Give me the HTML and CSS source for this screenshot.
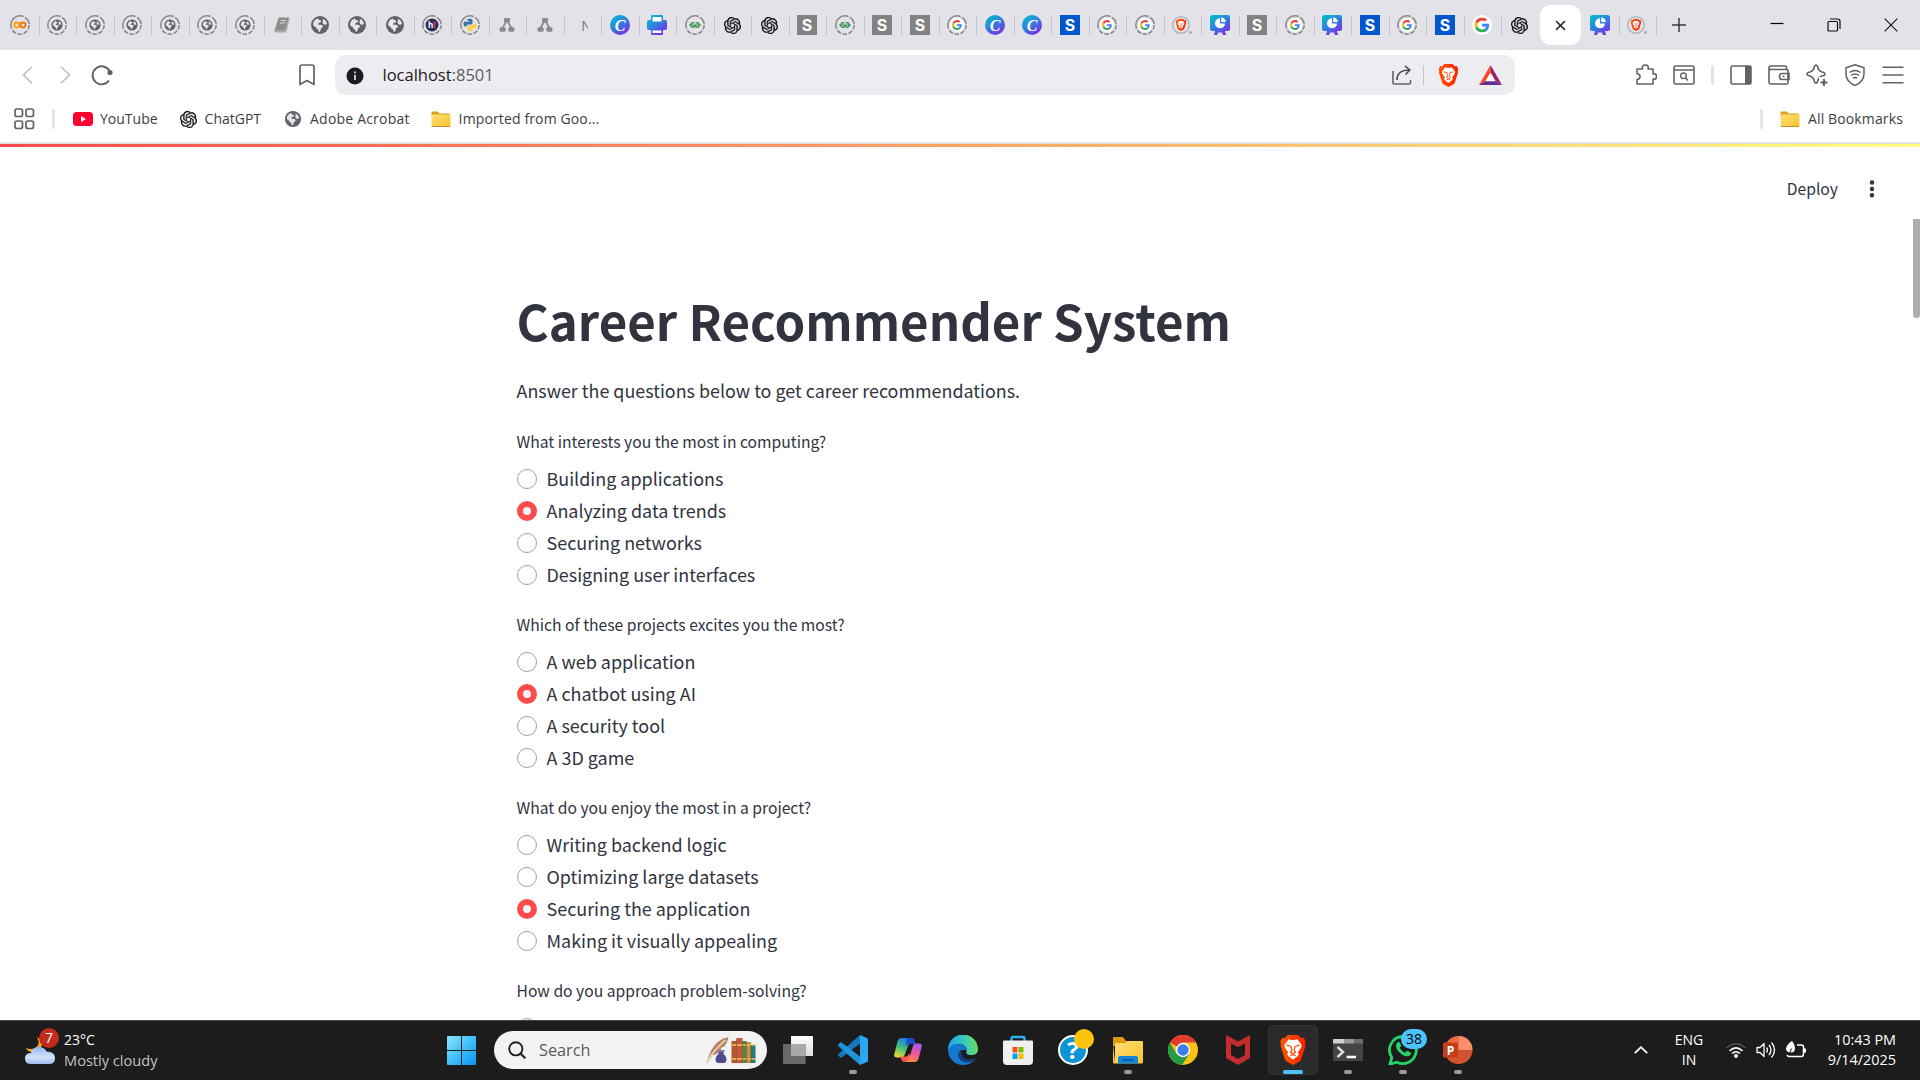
FILE: index.html
```html
<!DOCTYPE html>
<html lang="en">
<head>
<meta charset="utf-8">
<title>Career Recommender System</title>
<link rel="stylesheet" href="styles.css">
</head>
<body>
<svg class="gradients" width="0" height="0" aria-hidden="true">
  <defs>
    <linearGradient id="gCanva" x1="0" y1="0" x2=".7" y2="1"><stop offset="0" stop-color="#00c4cc"/><stop offset=".5" stop-color="#2b86dd"/><stop offset="1" stop-color="#7d2ae8"/></linearGradient>
    <linearGradient id="gWin" x1="0" y1="0" x2="1" y2="1"><stop offset="0" stop-color="#8be3ff"/><stop offset=".5" stop-color="#41c1fb"/><stop offset="1" stop-color="#0a90f5"/></linearGradient>
    <linearGradient id="gFolder" x1="0" y1="0" x2="1" y2="1"><stop offset="0" stop-color="#ffe07a"/><stop offset="1" stop-color="#f8c32c"/></linearGradient>
    <linearGradient id="gEdge" x1="0" y1=".3" x2="1" y2=".2"><stop offset="0" stop-color="#1fa2e4"/><stop offset=".5" stop-color="#36c6c6"/><stop offset="1" stop-color="#6fdd55"/></linearGradient>
    <linearGradient id="gBrave" x1="0" y1="0" x2="1" y2="0"><stop offset="0" stop-color="#ff5500"/><stop offset="1" stop-color="#ff2000"/></linearGradient>
    <linearGradient id="gCop1" x1=".6" y1="0" x2=".3" y2="1"><stop offset="0" stop-color="#1e7be8"/><stop offset=".5" stop-color="#3fc27a"/><stop offset="1" stop-color="#f6d233"/></linearGradient>
    <linearGradient id="gCop2" x1=".6" y1="0" x2=".3" y2="1"><stop offset="0" stop-color="#a259f0"/><stop offset=".5" stop-color="#f0569a"/><stop offset="1" stop-color="#ff8a4a"/></linearGradient>
    <linearGradient id="gCloud" x1="0" y1="0" x2="0" y2="1"><stop offset="0" stop-color="#8fb4f2"/><stop offset=".6" stop-color="#d5e3fb"/><stop offset="1" stop-color="#9dbcf3"/></linearGradient>
    <linearGradient id="gTv" x1="0" y1="0" x2="0" y2="1"><stop offset="0" stop-color="#fff"/><stop offset="1" stop-color="#dcdcdc"/></linearGradient>
  </defs>
</svg>
<svg class="sprite" aria-hidden="true">
  <symbol id="ring" viewBox="0 0 20 20"><circle cx="10" cy="10" r="9.200" fill="none" stroke="#85878b" stroke-width="1.500" stroke-dasharray="4.600 1.600 4.600 1.600 4.600 1.600 4.600 1.600 22 1.600 8 1.400"/></symbol>
  <symbol id="earth" viewBox="0 0 20 20"><circle cx="10" cy="10" r="9" fill="#5f6368"/><path d="M3 9.500Q3.500 5 7.500 3.400q1.800.2 1 1.800 2.700-.4 2.500 1.200-.3 1.400-2.200 1.300-.3 1.200-1.300 1.800 3 0 4.500.6 1.400 1 .7 2.400-2 .4-1.900 1.700-.2 2-1.500 2.700-1.500-.4-1.200-2.400-2.100-.5-2.300-2.500Q3.800 11.500 3 9.500z" fill="#e6e6ea"/><path d="M12.500 3.500q3.700 1.600 4.500 5.200-1 1.500-2.800.9-1.500-.2-1.400-1.600-1-1.700.3-2.500z" fill="#e6e6ea"/></symbol>
  <symbol id="globe" viewBox="0 0 20 20"><use href="#ring"/><use href="#earth" x="3.800" y="3.800" width="12.400" height="12.400"/></symbol>
  <symbol id="colab" viewBox="0 0 20 20"><use href="#ring"/><circle cx="6.800" cy="10" r="2.500" fill="none" stroke="#f9a30b" stroke-width="1.900"/><circle cx="13" cy="10" r="2.500" fill="none" stroke="#ee7708" stroke-width="1.900"/></symbol>
  <symbol id="book" viewBox="0 0 20 20"><path d="M6.500 2.500h10.500l-3.500 12.500H2.800z" fill="#8c8c8c"/><path d="M2.500 15h11l3.800-12 .6 1-3.700 13.500H3.200Q1.600 17 2.500 15z" fill="#a9a9a9"/><path d="M8.500 5.500h5.500M7.800 8h5.500" stroke="#d6d6d6"/></symbol>
  <symbol id="hashnode" viewBox="0 0 20 20"><use href="#ring"/><circle cx="10" cy="10" r="6.500" fill="#2f2a5c"/><text x="6" y="13" class="mark-h">h<tspan fill="#f04e6c">!</tspan></text></symbol>
  <symbol id="python" viewBox="0 0 20 20"><use href="#ring"/><path d="M6.500 4.500Q10 3 12.500 4.500V8q0 1.500-1.500 1.500H8q-1.500 0-1.500 2H5q-1.500-.5-1.500-3T5 6.800h4.500z" fill="#3775a9"/><path d="M13.500 15.500Q10 17 7.500 15.500V12q0-1.500 1.500-1.500h3q1.500 0 1.500-2H15q1.500.5 1.500 3T15 13.200h-4.500z" fill="#ffcf3f"/></symbol>
  <symbol id="nodes" viewBox="0 0 20 20"><path d="M10 5L5 14M10 5l5 9" stroke="#8a8a8a" stroke-width="1.700"/><rect x="7" y="3" width="6" height="4.500" rx="1" fill="#8a8a8a"/><rect x="2.600" y="12.300" width="6" height="4.500" rx="1" fill="#8a8a8a"/><rect x="11.400" y="12.300" width="6" height="4.500" rx="1" fill="#8a8a8a"/></symbol>
  <symbol id="canva" viewBox="0 0 20 20"><circle cx="10" cy="10" r="10" fill="url(#gCanva)"/><text x="10" y="15.500" class="mark-c">C</text></symbol>
  <symbol id="printer" viewBox="0 0 20 20"><path d="M5 0h10q1 0 1 1v4h2q2 0 2 2v6q0 2-2 2h-2v4q0 1-1 1H5q-1 0-1-1v-4H2q-2 0-2-2V7q0-2 2-2h2V1q0-1 1-1z" fill="url(#gCanva)"/><path d="M5.500 2h9v4.500h-9zM5.500 15.500h9V18h-9z" fill="#fff"/></symbol>
  <symbol id="gfg" viewBox="0 0 20 20"><use href="#ring"/><path d="M4 10h12M9.300 8.300a2.200 2.200 0 1 0 0 3.400V10M10.700 8.300a2.200 2.200 0 1 1 0 3.400V10" fill="none" stroke="#2f8d46" stroke-width="1.200"/></symbol>
  <symbol id="openai" viewBox="0 0 24 24"><path d="M22.2819 9.8211a5.9847 5.9847 0 0 0-.5157-4.9108 6.0462 6.0462 0 0 0-6.5098-2.9A6.0651 6.0651 0 0 0 4.9807 4.1818a5.9847 5.9847 0 0 0-3.9977 2.9 6.0462 6.0462 0 0 0 .7427 7.0966 5.98 5.98 0 0 0 .511 4.9107 6.051 6.051 0 0 0 6.5146 2.9001A5.9847 5.9847 0 0 0 13.2599 24a6.0557 6.0557 0 0 0 5.7718-4.2058 5.9894 5.9894 0 0 0 3.9977-2.9001 6.0557 6.0557 0 0 0-.7475-7.0729zm-9.022 12.6081a4.4755 4.4755 0 0 1-2.8764-1.0408l.1419-.0804 4.7783-2.7582a.7948.7948 0 0 0 .3927-.6813v-6.7369l2.02 1.1686a.071.071 0 0 1 .038.052v5.5826a4.504 4.504 0 0 1-4.4945 4.4944zm-9.6607-4.1254a4.4708 4.4708 0 0 1-.5346-3.0137l.142.0852 4.783 2.7582a.7712.7712 0 0 0 .7806 0l5.8428-3.3685v2.3324a.0804.0804 0 0 1-.0332.0615L9.74 19.9502a4.4992 4.4992 0 0 1-6.1408-1.6464zM2.3408 7.8956a4.485 4.485 0 0 1 2.3655-1.9728V11.6a.7664.7664 0 0 0 .3879.6765l5.8144 3.3543-2.0201 1.1685a.0757.0757 0 0 1-.071 0l-4.8303-2.7865A4.504 4.504 0 0 1 2.3408 7.872zm16.5963 3.8558L13.1038 8.364 15.1192 7.2a.0757.0757 0 0 1 .071 0l4.8303 2.7913a4.4944 4.4944 0 0 1-.6765 8.1042v-5.6772a.79.79 0 0 0-.407-.667zm2.0107-3.0231l-.142-.0852-4.7735-2.7818a.7759.7759 0 0 0-.7854 0L9.409 9.2297V6.8974a.0662.0662 0 0 1 .0284-.0615l4.8303-2.7866a4.4992 4.4992 0 0 1 6.6802 4.66zM8.3065 12.863l-2.02-1.1638a.0804.0804 0 0 1-.038-.0567V6.0742a4.4992 4.4992 0 0 1 7.3757-3.4537l-.142.0805L8.704 5.459a.7948.7948 0 0 0-.3927.6813zm1.0976-2.3654l2.602-1.4998 2.6069 1.4998v2.9994l-2.5974 1.4997-2.6067-1.4997Z" fill="#111" stroke="#111" stroke-width=".4"/></symbol>
  <symbol id="sgrey" viewBox="0 0 20 20"><rect width="20" height="20" fill="#828282"/><text x="10" y="15.800" class="mark-s">S</text></symbol>
  <symbol id="sblue" viewBox="0 0 20 20"><rect width="20" height="20" fill="#0056cc"/><text x="10" y="15.800" class="mark-s">S</text></symbol>
  <symbol id="goog" viewBox="0 0 48 48"><path fill="#EA4335" d="M24 9.500c3.540 0 6.710 1.220 9.210 3.600l6.850-6.850C35.900 2.380 30.470 0 24 0 14.620 0 6.510 5.380 2.560 13.220l7.980 6.190C12.430 13.720 17.740 9.500 24 9.500z"/><path fill="#4285F4" d="M46.980 24.550c0-1.570-.15-3.090-.38-4.550H24v9.020h12.940c-.58 2.960-2.260 5.480-4.780 7.180l7.730 6c4.510-4.180 7.090-10.360 7.090-17.650z"/><path fill="#FBBC05" d="M10.530 28.590c-.48-1.450-.76-2.990-.76-4.590s.27-3.140.76-4.590l-7.980-6.190C.92 16.460 0 20.120 0 24c0 3.880.92 7.540 2.560 10.780l7.970-6.190z"/><path fill="#34A853" d="M24 48c6.480 0 11.930-2.130 15.890-5.810l-7.730-6c-2.150 1.450-4.920 2.300-8.160 2.300-6.260 0-11.570-4.220-13.470-9.910l-7.980 6.190C6.510 42.620 14.620 48 24 48z"/></symbol>
  <symbol id="gring" viewBox="0 0 20 20"><circle cx="10" cy="10" r="7" fill="#fff"/><use href="#ring"/><use href="#goog" x="5" y="5" width="10" height="10"/></symbol>
  <symbol id="gfull" viewBox="0 0 20 20"><circle cx="10" cy="10" r="10" fill="#fff"/><use href="#goog" x="2.500" y="2.500" width="15" height="15"/></symbol>
  <symbol id="lion" viewBox="0 0 24 28"><path d="M7 0h10l2.500 2.800 2.500-.3L24 6l-.8 2.500.5 1.500-4 12.500q-.5 1.500-2 2.500L12 28l-5.700-3q-1.500-1-2-2.500L.3 10l.5-1.500L0 6l2-3.500 2.500.3z" fill="url(#gBrave)"/><path d="M8 4l4 .8L16 4l4 5-.5 3-3 4 1 2-1.500 2-4 3-4-3-1.500-2 1-2-3-4L4 9z" fill="#fff"/><path d="M6 9.500l4.500 1.200M18 9.500l-4.500 1.200M10.300 11l.7 3.500-1.500 1.700 2.500 1.300 2.500-1.300-1.500-1.700.7-3.500M9.500 19.500l2.500-1.300 2.500 1.300" fill="none" stroke="#ff4500" stroke-width="1.100"/></symbol>
  <symbol id="bravering" viewBox="0 0 20 20"><circle cx="9" cy="10" r="8.300" fill="none" stroke="#b3b6be" stroke-width="1.500"/><use href="#lion" x="3.500" y="4" width="11" height="12"/><circle cx="18.500" cy="17.500" r="1.400" fill="#a5a8ae"/></symbol>
  <symbol id="present" viewBox="0 0 20 20"><path d="M2.500 0h15Q20 0 20 2.500v11q0 2.500-2.500 2.500H15l1 4h-3l-1-2.500H8L7 20H4l1-4H2.500Q0 16 0 13.500v-11Q0 0 2.500 0z" fill="url(#gCanva)"/><path d="M10 3.300a5 5 0 1 0 5 5.200h-5z" fill="#fff"/><path d="M11.200 2.500v4.600h4.600a4.600 4.600 0 0 0-4.600-4.600z" fill="#fff"/></symbol>
  <symbol id="folder" viewBox="0 0 20 17"><path d="M1.500 1h5l2 2H18q1 0 1 1v3H.500V2q0-1 1-1z" fill="#dca11c"/><path d="M1.500 4H18.500q1 0 1 1v10q0 1.200-1 1.200H1.500q-1 0-1-1.200V5q0-1 1-1z" fill="url(#gFolder)"/><path d="M1 16h18" stroke="#c69126"/></symbol>
</svg>

<header class="browser">
  <div class="tabstrip">
    <div class="tab"><svg><use href="#colab"/></svg></div>
    <div class="tab"><svg><use href="#globe"/></svg></div>
    <div class="tab"><svg><use href="#globe"/></svg></div>
    <div class="tab"><svg><use href="#globe"/></svg></div>
    <div class="tab"><svg><use href="#globe"/></svg></div>
    <div class="tab"><svg><use href="#globe"/></svg></div>
    <div class="tab"><svg><use href="#globe"/></svg></div>
    <div class="tab"><svg><use href="#book"/></svg></div>
    <div class="tab"><svg><use href="#earth"/></svg></div>
    <div class="tab"><svg><use href="#earth"/></svg></div>
    <div class="tab"><svg><use href="#earth"/></svg></div>
    <div class="tab"><svg><use href="#hashnode"/></svg></div>
    <div class="tab"><svg><use href="#python"/></svg></div>
    <div class="tab"><svg><use href="#nodes"/></svg></div>
    <div class="tab"><svg><use href="#nodes"/></svg></div>
    <div class="tab"><span class="tab-text">N</span></div>
    <div class="tab"><svg><use href="#canva"/></svg></div>
    <div class="tab"><svg><use href="#printer"/></svg></div>
    <div class="tab"><svg><use href="#gfg"/></svg></div>
    <div class="tab"><svg class="small"><use href="#openai"/></svg></div>
    <div class="tab"><svg class="small"><use href="#openai"/></svg></div>
    <div class="tab"><svg><use href="#sgrey"/></svg></div>
    <div class="tab"><svg><use href="#gfg"/></svg></div>
    <div class="tab"><svg><use href="#sgrey"/></svg></div>
    <div class="tab"><svg><use href="#sgrey"/></svg></div>
    <div class="tab"><svg><use href="#gring"/></svg></div>
    <div class="tab"><svg><use href="#canva"/></svg></div>
    <div class="tab"><svg><use href="#canva"/></svg></div>
    <div class="tab"><svg><use href="#sblue"/></svg></div>
    <div class="tab"><svg><use href="#gring"/></svg></div>
    <div class="tab"><svg><use href="#gring"/></svg></div>
    <div class="tab"><svg><use href="#bravering"/></svg></div>
    <div class="tab"><svg><use href="#present"/></svg></div>
    <div class="tab"><svg><use href="#sgrey"/></svg></div>
    <div class="tab"><svg><use href="#gring"/></svg></div>
    <div class="tab"><svg><use href="#present"/></svg></div>
    <div class="tab"><svg><use href="#sblue"/></svg></div>
    <div class="tab"><svg><use href="#gring"/></svg></div>
    <div class="tab"><svg><use href="#sblue"/></svg></div>
    <div class="tab"><svg><use href="#gfull"/></svg></div>
    <div class="tab plain"><svg class="small"><use href="#openai"/></svg></div>
    <div class="tab-active"><svg viewBox="0 0 12 12"><path d="M1.200 1.200l9.600 9.600M10.800 1.200L1.200 10.800" stroke="#333" stroke-width="1.700"/></svg></div>
    <div class="tab"><svg><use href="#present"/></svg></div>
    <div class="tab"><svg><use href="#bravering"/></svg></div>
    <svg class="newtab" viewBox="0 0 14 14"><path d="M7 0v14M0 7h14" stroke="#3b3b40" stroke-width="1.500"/></svg>
    <div class="window-buttons">
      <svg viewBox="0 0 14 14"><path d="M.5 5.500h13" stroke="#000" stroke-width="1.200"/></svg>
      <svg viewBox="0 0 14 14"><path d="M1 4.500q0-1 1-1h7.500q1 0 1 1V12q0 1-1 1H2q-1 0-1-1zM3 1h7.500q2.500 0 2.500 2.500V11" fill="none" stroke="#111" stroke-width="1.200"/></svg>
      <svg viewBox="0 0 14 14"><path d="M.7.7l12.600 12.600M13.300.7L.7 13.300" stroke="#111" stroke-width="1.100"/></svg>
    </div>
  </div>

  <div class="toolbar">
    <div class="nav">
      <svg class="back" viewBox="0 0 12 20"><path d="M11 1L1.500 10l9.500 9" fill="none" stroke="#bcbdc1" stroke-width="1.700"/></svg>
      <svg class="fwd" viewBox="0 0 12 20"><path d="M1 1l9.500 9L1 19" fill="none" stroke="#bcbdc1" stroke-width="1.700"/></svg>
      <svg class="reload" viewBox="0 0 22 22"><path d="M18 16.500A9 9 0 1 1 18.500 7" fill="none" stroke="#5f6368" stroke-width="1.900"/><circle cx="19" cy="8.500" r="2.600" fill="#5f6368"/></svg>
      <svg class="mark" viewBox="0 0 16 22"><path d="M1 3q0-2 2-2h10q2 0 2 2v17.500L8 16.500 1 20.500z" fill="none" stroke="#5f6368" stroke-width="1.700" stroke-linejoin="round"/></svg>
    </div>
    <div class="urlbar">
      <svg class="info" viewBox="0 0 18 18"><circle cx="9" cy="9" r="8.500" fill="#1d1b20"/><path d="M9 7.800V13M9 4.500v1.700" stroke="#edecf1" stroke-width="1.600"/></svg>
      <div class="url">localhost<span>:8501</span></div>
      <svg class="share" viewBox="0 0 20 20"><path d="M1 6v12q0 1 1 1h15q1.500 0 1.500-1v-3" fill="none" stroke="#5f6368" stroke-width="1.600"/><path d="M5 15Q5 5 17.500 5M13 .8L17.800 5 13.500 9.500" fill="none" stroke="#4b4c52" stroke-width="1.600"/></svg>
      <i class="bar"></i>
      <svg class="shield-lion" viewBox="0 0 24 28"><use href="#lion"/></svg>
      <svg class="bat" viewBox="0 0 23 20"><path d="M11.500 0L0 20l6.500-4 5-8.500z" fill="#ff4724"/><path d="M11.500 0L23 20l-6.500-4-5-8.500z" fill="#9e1f63"/><path d="M0 20h23l-6.500-4h-10z" fill="#662d91"/><path d="M11.500 8l5 8.200h-10z" fill="#fff"/></svg>
    </div>
    <div class="tools">
      <svg viewBox="0 0 22 22"><path d="M2 5h5.500q-1-4 2.800-4t2.700 4h5v5q3.500-.8 3.500 2.500t-3.500 2.500v5H2v-4.500q3-.3 3-3T2 9.700z" fill="none" stroke="#5f6368" stroke-width="1.600" stroke-linejoin="round"/></svg>
      <svg viewBox="0 0 22 22"><path d="M1 3.500q0-1.500 1.500-1.500h17q1.500 0 1.500 1.500v15q0 1.500-1.500 1.500h-17Q1 20 1 18.500zM1 6h20" fill="none" stroke="#5f6368" stroke-width="1.600"/><circle cx="10.500" cy="11.800" r="2.800" fill="none" stroke="#5f6368" stroke-width="1.400"/><path d="M12.500 14l2.500 2.500" stroke="#5f6368" stroke-width="1.500"/></svg>
      <i class="bar"></i>
      <svg viewBox="0 0 22 22"><rect x="1" y="2" width="20" height="18" rx="1.500" fill="none" stroke="#5f6368" stroke-width="1.600"/><path d="M15 2h6v18h-6z" fill="#5f6368"/></svg>
      <svg viewBox="0 0 22 22"><path d="M18.500 5V3.500Q18.500 2 17 2H3Q1 2 1 4v14q0 2 2 2h15.500q1.500 0 1.500-1.500V7q0-1.500-1.500-1.500H3Q1 5.500 1 4M21 9.500h-7q-2.500 0-2.500 3t2.500 3h7zM14.500 12.500h2" fill="none" stroke="#5f6368" stroke-width="1.600"/></svg>
      <svg viewBox="0 0 22 22"><path d="M10 1q1.500 0 2 3 .8 3 4 4 3 .7 3 2t-3 2q-3.200 1-4 4-.5 3-2 3t-2-3q-.8-3-4-4-3-.7-3-2t3-2q3.200-1 4-4 .5-3 2-3z" fill="none" stroke="#5f6368" stroke-width="1.600"/><path d="M13 13h9v9h-9z" fill="#fff"/><path d="M18 15v7M14.500 18.500h7" stroke="#5f6368" stroke-width="2"/></svg>
      <svg viewBox="0 0 22 22"><path d="M11 .8l9 3v6q0 8-9 11.700-9-3.700-9-11.700v-6z" fill="none" stroke="#5f6368" stroke-width="1.500" stroke-linejoin="round"/><path d="M5.500 8.500q5.500-4 11 0M7 11.500q4-2.800 8 0M9 14q2-1.200 4 0" fill="none" stroke="#5f6368" stroke-width="1.500"/></svg>
      <svg viewBox="0 0 22 22"><path d="M.5 3.300h21M.5 11h21M.5 18.700h21" stroke="#5f6368" stroke-width="1.500"/></svg>
    </div>
  </div>

  <div class="bookmarks">
    <svg class="grid" viewBox="0 0 21 22"><g fill="none" stroke="#5f6368" stroke-width="1.700"><rect x="1" y="1" width="7.500" height="7.500" rx="2"/><rect x="12" y="1" width="7.500" height="7.500" rx="2"/><rect x="1" y="13" width="7.500" height="7.500" rx="2"/><rect x="12" y="13" width="7.500" height="7.500" rx="2"/></g></svg>
    <i class="bar"></i>
    <span class="bm bm-yt"><svg class="yt" viewBox="0 0 20 14"><rect width="20" height="14" rx="3.500" fill="#ff0033"/><path d="M8 4l5 3-5 3z" fill="#fff"/></svg><span>YouTube</span></span>
    <span class="bm bm-gpt"><svg class="small"><use href="#openai"/></svg><span>ChatGPT</span></span>
    <span class="bm bm-adobe"><svg><use href="#earth"/></svg><span>Adobe Acrobat</span></span>
    <span class="bm bm-imp"><svg><use href="#folder"/></svg><span>Imported from Goo...</span></span>
    <i class="bar bar-right"></i>
    <span class="bm bm-all"><svg><use href="#folder"/></svg><span>All Bookmarks</span></span>
  </div>
</header>

<main class="app">
  <div class="decoration"></div>
  <div class="app-header">
    <span>Deploy</span>
    <svg viewBox="0 0 6 18"><g fill="#31333f"><circle cx="3" cy="2.500" r="2.200"/><circle cx="3" cy="9" r="2.200"/><circle cx="3" cy="15.300" r="2.200"/></g></svg>
  </div>
  <div class="scroll-thumb"></div>
  <section class="content">
    <h1>Career Recommender System</h1>
    <p class="intro">Answer the questions below to get career recommendations.</p>
    <div class="question">
      <div class="label">What interests you the most in computing?</div>
      <div class="option"><i></i>Building applications</div>
      <div class="option checked"><i></i>Analyzing data trends</div>
      <div class="option"><i></i>Securing networks</div>
      <div class="option"><i></i>Designing user interfaces</div>
    </div>
    <div class="question">
      <div class="label">Which of these projects excites you the most?</div>
      <div class="option"><i></i>A web application</div>
      <div class="option checked"><i></i>A chatbot using AI</div>
      <div class="option"><i></i>A security tool</div>
      <div class="option"><i></i>A 3D game</div>
    </div>
    <div class="question">
      <div class="label">What do you enjoy the most in a project?</div>
      <div class="option"><i></i>Writing backend logic</div>
      <div class="option"><i></i>Optimizing large datasets</div>
      <div class="option checked"><i></i>Securing the application</div>
      <div class="option"><i></i>Making it visually appealing</div>
    </div>
    <div class="question">
      <div class="label">How do you approach problem-solving?</div>
      <div class="option"><i></i></div>
    </div>
  </section>
</main>

<footer class="taskbar">
  <div class="weather">
    <div class="weather-icon">
      <svg viewBox="0 0 32 32"><path d="M13 3q4 8-2 11-4 2-9.500 0Q6 20 14 18l6-10z" fill="#f5a623"/><path d="M7 30q-6 0-6-5.500T7 19q1.500-6 8-6 5.500 0 7.500 4.500 8.500 0 8.500 6.500 0 6-6 6z" fill="url(#gCloud)"/></svg>
      <b>7</b>
    </div>
    <div class="weather-text"><span>23°C</span><em>Mostly cloudy</em></div>
  </div>
  <svg class="start" viewBox="0 0 29 29"><path d="M1 0h13v14H0V1q0-1 1-1zM15 0h13q1 0 1 1v13H15zM0 15h14v14H1q-1 0-1-1zM15 15h14v13q0 1-1 1H15z" fill="url(#gWin)"/></svg>
  <div class="search">
    <svg class="lens" viewBox="0 0 18 18"><circle cx="7.800" cy="7.800" r="6.600" fill="none" stroke="#222" stroke-width="1.900"/><path d="M12.500 12.500l4.800 4.800" stroke="#222" stroke-width="2.200"/></svg>
    <span>Search</span>
    <svg class="quill" viewBox="0 0 50 28"><path d="M1 27Q4 14 12 6q5-4 11-5-1 6-5 10l-3 1 1 1q-4 6-9 6L2 27z" fill="#b98562"/><path d="M1 27Q7 15 20 4" fill="none" stroke="#f1ddc8" stroke-width="1.500"/><path d="M13 15h5v3q3 2 3 5 0 4-3 4h-5q-3 0-3-4 0-3 3-5z" fill="#4d4a8c"/><path d="M12 14h7v2h-7z" fill="#7d79b8"/><path d="M26 5h5v22h-5z" fill="#b4552d"/><path d="M31 2h6v25h-6z" fill="#c8553a"/><path d="M37 5h4v22h-4z" fill="#4c8c48"/><path d="M41 6h4.500v21H41z" fill="#c49235"/><path d="M45.500 9H50v18h-4.500z" fill="#217b83"/><path d="M26 9h24M26 23h24" stroke="#edc25b" stroke-width="1.400"/><path d="M31 3v24M37 5v22M41 6v21M45.500 9v18" stroke="#6e3c20" stroke-width=".6"/></svg>
  </div>
  <div class="apps">
    <div class="app-btn"><svg viewBox="0 0 30 30"><path d="M8 1h21q1 0 1 1v19H8z" fill="url(#gTv)"/><path d="M1 9h21.500v20H1q-1 0-1-1V10q0-1 1-1z" fill="#6a6a6a"/><path d="M8 9h14.500v12H8z" fill="#a9a9a9"/></svg></div>
    <div class="app-btn run"><svg viewBox="0 0 30 30"><path d="M22 0l7 3q1 .5 1 1.500v21q0 1-1 1.500l-7 3z" fill="#2aa7f3"/><path d="M22 0v8.500L4 22.300q-1 .7-2 0l-1.500-1.500q-1-1 0-2z" fill="#1478bd"/><path d="M22 30v-8.500L4 7.700q-1-.7-2 0L.5 9.200q-1 1 0 2z" fill="#1f94dd"/></svg></div>
    <div class="app-btn"><svg viewBox="0 0 30 30"><path d="M8.500 3H18l-6 16q-1 3.500-4 3.500H4Q.5 22.500 1.300 19L4.500 6.500Q5.500 3 8.500 3z" fill="url(#gCop1)"/><path d="M14 3h4.500q2.500 0 3.300 3l.9 3H16q-2.500 0-3.500 3z" fill="#1c4fd0"/><path d="M21.500 27H12q-3 0-3.700-2.500L7.500 21.500h5q2.500 0 3.500-3z" fill="#f2574a"/><path d="M21.500 27H13q2.500-1 3.500-4.500l3.300-11Q20.500 8.500 23 8.500h3q3.700 0 2.700 3.500L25.500 23.500q-1 3.500-4 3.500z" fill="url(#gCop2)"/></svg></div>
    <div class="app-btn"><svg viewBox="0 0 30 30"><path d="M0 15A15 15 0 0 1 30 14q0 6-6.500 6-6 0-5-3.500Q19 10 12 9 4 9 0 15z" fill="url(#gEdge)"/><path d="M0 16Q2 9 10 9q8 .5 8 6-9-1-7 6 2 6 9 6 4 0 7-2-5 5-12 5A15 15 0 0 1 0 16z" fill="#1677ce"/><path d="M11 17q-2 4 1 7.500 4 4 10 2.500l5.500-2.500q1.500-1.500-1-.8Q14 27 13.500 17z" fill="#103f80"/></svg></div>
    <div class="app-btn"><svg viewBox="0 0 30 30"><path d="M8.500 7V3.500q0-1.500 1.500-1.500h10q1.500 0 1.500 1.500V7" fill="none" stroke="#2bb0f0" stroke-width="2.400"/><path d="M1 5.500h28q1 0 1 1V26q0 4-4 4H4q-4 0-4-4V6.500q0-1 1-1z" fill="#efefef"/><path d="M9.500 12h5v5.500h-5z" fill="#f25022"/><path d="M15.500 12h5v5.500h-5z" fill="#7fba00"/><path d="M9.500 18.500h5V24h-5z" fill="#00a4ef"/><path d="M15.500 18.500h5V24h-5z" fill="#ffb900"/></svg></div>
    <div class="app-btn"><svg viewBox="0 0 30 30"><circle cx="15" cy="15" r="14" fill="#0c94d8" stroke="#fff" stroke-width="2"/><text x="15" y="23.500" class="mark-q">?</text></svg><b class="dot"></b></div>
    <div class="app-btn run"><svg viewBox="0 0 30 30"><path d="M1 2h9l3 4h15v5H0V3q0-1 1-1z" fill="#dc9c0c"/><path d="M2 28V8h10l2-2h15q1 0 1 1v20q0 1.500-1.500 1.500H1.500Q0 28.500 0 27V9z" fill="url(#gFolder)"/><path d="M5 28.500V23q0-2 2-2h16q2 0 2 2v5.500z" fill="#1585d8"/><path d="M10 25h10" stroke="#0b4f92" stroke-width="1.600"/></svg></div>
    <div class="app-btn"><svg viewBox="0 0 30 30"><circle cx="15" cy="15" r="15" fill="#fbc116"/><path d="M15 15L2 7.500A15 15 0 0 1 28 7.500H15z" fill="#e33b2e"/><path d="M2 7.500A15 15 0 0 0 14 30l7.500-11.200L8.500 18.800z" fill="#249a41"/><circle cx="15" cy="15" r="7.200" fill="#fff"/><circle cx="15" cy="15" r="5.700" fill="#3b7ded"/></svg></div>
    <div class="app-btn"><svg viewBox="0 0 30 30"><path d="M3 0l12 6.500L27 0v23l-12 7L3 23zM8 8.500V20l7 4 7-4V8.500L15 12z" fill="#c42d2d" fill-rule="evenodd"/></svg></div>
    <div class="app-btn current"><svg viewBox="0 0 24 28"><use href="#lion"/></svg></div>
    <div class="app-btn run"><svg viewBox="0 0 30 30"><path d="M1 4h28q1 0 1 1v20q0 1-1 1H1q-1 0-1-1V5q0-1 1-1z" fill="#444"/><path d="M0 8.500V5q0-1 1-1h10v4.500z" fill="#d0d0d0"/><path d="M11 4h10v4.500H11z" fill="#999"/><path d="M21 4h8q1 0 1 1v3.500h-9z" fill="#6c6c6c"/><path d="M4.500 12l5.500 5-5.500 5" fill="none" stroke="#ddd" stroke-width="2.500"/><path d="M13.500 22h9.500" stroke="#fff" stroke-width="2.500"/></svg></div>
    <div class="app-btn run"><svg viewBox="0 0 30 30"><path d="M15 1.500A13.500 13.500 0 1 1 9 27.200L2 29l1.800-6.500A13.500 13.500 0 0 1 15 1.500z" fill="none" stroke="#25d366" stroke-width="2.800"/><path d="M9 8q2-2 3 0l1.200 3-1.400 2q2 3.500 5.200 4.700l2-2 3.200 1.500q1.800 1-.2 3-3 2.500-8-.8-5.500-4-6-8Q8 9 9 8z" fill="#25d366"/></svg><b class="count">38</b></div>
    <div class="app-btn run"><svg viewBox="0 0 30 30"><circle cx="15.500" cy="15" r="14" fill="#d35230"/><path d="M15.500 1a14 14 0 0 1 14 14h-14z" fill="#ff8f6b"/><path d="M15.500 1v14H2A14 14 0 0 1 15.500 1z" fill="#ed6c47"/><rect y="7.500" width="15" height="15" rx="1.500" fill="#c43e1c"/><text x="7.500" y="19.500" class="mark-p">P</text></svg></div>
  </div>
  <div class="tray">
    <svg class="chev" viewBox="0 0 14 8"><path d="M.8 7.200L7 1.200l6.200 6" fill="none" stroke="#fff" stroke-width="1.800"/></svg>
    <div class="lang"><span>ENG</span><span>IN</span></div>
    <svg class="wifi" viewBox="0 0 20 17"><path d="M.7 6q9.300-8.500 18.600 0" fill="none" stroke="#555" stroke-width="1.500"/><path d="M3.500 8.800q6.500-6 13 0M6 11.500q4-3.500 8 0" fill="none" stroke="#fff" stroke-width="1.600"/><circle cx="10" cy="14" r="2" fill="#fff"/></svg>
    <svg class="vol" viewBox="0 0 20 18"><path d="M1 6.500h3L8 2.500v13l-4-4H1z" fill="none" stroke="#fff" stroke-width="1.300" stroke-linejoin="round"/><path d="M10.500 6.500q1.800 2.500 0 5M13 4q4 5 0 10M15.500 1.500q6 7.500 0 15" fill="none" stroke="#fff" stroke-width="1.300"/></svg>
    <svg class="batt" viewBox="0 0 20 18"><path d="M11 4h4.500q2 0 2 2v7q0 2.500-2 2.500H3Q1.500 15.500 1 14" fill="none" stroke="#fff" stroke-width="1.500"/><path d="M18 7.500h2v4h-2z" fill="#fff"/><path d="M6 0q3 3 3 7 0 4.500-4 4.500-5 0-5-4Q1 3 6 0z" fill="#fff"/><path d="M1 13.500Q5 12 5.500 7.500M5 12.700h4" fill="none" stroke="#1c1c1c"/></svg>
    <div class="clock"><span>10:43 PM</span><span>9/14/2025</span></div>
  </div>
</footer>
</body>
</html>
```
FILE: styles.css
```css
* { box-sizing: border-box; }

body {
  margin: 0;
  width: 1920px;
  height: 1080px;
  overflow: hidden;
  display: flex;
  flex-direction: column;
  background: #fff;
  font-family: "Open Sans", "Noto Sans", sans-serif;
  font-size: 14px;
  color: #3c3d42;
}

svg { display: block; flex: none; }
.gradients { position: absolute; }
.sprite { display: none; }
.bar { flex: none; width: 3px; height: 20px; border-radius: 2px; background: #e3e2e8; }

.mark-h { font: bold 8px "Open Sans", sans-serif; fill: #fff; }
.mark-c { font: italic bold 16px "Liberation Serif", serif; fill: #fff; text-anchor: middle; }
.mark-s { font: bold 16px Inter, "Liberation Sans", sans-serif; fill: #fff; text-anchor: middle; }
.mark-q { font: bold 24px "Open Sans", sans-serif; fill: #fff; text-anchor: middle; }
.mark-p { font: bold 12px "Open Sans", sans-serif; fill: #fff; text-anchor: middle; }

/* Tab strip */
.browser { flex: none; height: 144px; border-bottom: 2px solid #e3e2e8; }
.tabstrip { display: flex; align-items: center; height: 50px; padding-left: 2.2px; background: #e3e2e8; }
.tab {
  flex: none;
  display: flex;
  align-items: center;
  justify-content: center;
  width: 37.5px;
  height: 20px;
  padding-right: 1.5px;
  border-right: 1px solid #c6c6cc;
}
.tab.plain { border-right-color: transparent; }
.tab svg { width: 20px; height: 20px; }
.tab svg.small, .bm svg.small { width: 17px; height: 17px; }
.tab-text { width: 7px; margin-left: 5px; overflow: hidden; font-size: 14px; color: #77787c; }
.tab-active {
  flex: none;
  display: flex;
  align-items: center;
  justify-content: center;
  width: 41px;
  height: 40px;
  margin-right: 1.500px;
  border-radius: 11px;
  background: #fff;
}
.tab-active svg { width: 11px; height: 11px; }
.newtab { width: 14px; height: 14px; margin-left: 15px; }
.window-buttons { display: flex; gap: 43px; margin: 0 22px 0 auto; }
.window-buttons svg { width: 14px; height: 14px; }

/* Address row */
.toolbar { display: flex; align-items: center; height: 50px; }
.nav { display: flex; align-items: center; width: 335px; padding-left: 22px; }
.nav .back, .nav .fwd { width: 11px; height: 20px; }
.nav .fwd { margin-left: 27px; }
.nav .reload { width: 22px; height: 22px; margin-left: 20px; }
.nav .mark { width: 16px; height: 22px; margin-left: 186px; }
.urlbar {
  display: flex;
  align-items: center;
  width: 1180px;
  height: 40px;
  padding: 0 13px 0 11px;
  border-radius: 11px;
  background: #edecf1;
}
.urlbar .info { width: 18px; height: 18px; margin-top: 2px; }
.url { margin: -2px auto 0 18.5px; font-size: 16.5px; letter-spacing: 0; color: #1d1b20; }
.url span { color: #5c5c62; }
.share { width: 20px; height: 20px; }
.urlbar .bar { width: 1px; margin: 0 14px 0 11px; background: #c2c2c8; }
.shield-lion { width: 21px; height: 23px; }
.bat { width: 23px; height: 20px; margin-left: 20px; }
.tools { display: flex; align-items: center; justify-content: space-between; width: 269px; margin-left: 120px; }
.tools svg { width: 22px; height: 22px; }

/* Bookmarks row */
.bookmarks { display: flex; align-items: center; height: 38px; padding: 0 17px 0 14px; }
.grid { width: 21px; height: 22px; }
.bookmarks .bar { margin-left: 17px; }
.bookmarks .bar-right { margin-left: auto; }
.bm { display: flex; align-items: center; white-space: nowrap; }
.bm span { margin-top: -2px; }
.bm svg { width: 20px; height: 18px; }
.bm svg.yt { height: 14px; }
.bm-yt { margin-left: 18px; gap: 7px; }
.bm-gpt { margin-left: 22px; gap: 8px; }
.bm-adobe { margin-left: 22px; gap: 7px; letter-spacing: .2px; }
.bm-imp { margin-left: 21px; gap: 8px; letter-spacing: .13px; }
.bm-all { margin-left: 17px; gap: 8px; letter-spacing: .13px; }

/* Page */
.app {
  flex: 1;
  min-height: 0;
  position: relative;
  overflow: hidden;
  font-family: "Noto Sans CJK JP", "Noto Sans CJK SC", sans-serif;
  color: #31333f;
}
.decoration { height: 3px; background: linear-gradient(90deg, #ff4b4b, #ffa468 50%, #ffff80); }
.app-header {
  display: flex;
  align-items: center;
  justify-content: flex-end;
  gap: 31px;
  height: 84px;
  padding-right: 45px;
  font-size: 15.7px;
}
.app-header span { margin-top: -2px; }
.app-header svg { width: 6px; height: 18px; }
.scroll-thumb {
  position: absolute;
  top: 75px;
  right: 0;
  width: 7px;
  height: 99px;
  border-radius: 0 0 4px 4px;
  background: #adadb1;
}
.content { padding: 56px 0 0 516.5px; }
h1 { margin: 0 0 21px; font-size: 49.2px; line-height: 66px; font-weight: 700; }
.intro { margin: 0 0 23px; font-size: 17.9px; line-height: 32px; }
.question { margin-bottom: 22px; }
.label { margin-bottom: 8px; font-size: 15.67px; line-height: 25px; }
.option { display: flex; align-items: center; gap: 10px; height: 32px; font-size: 17.95px; line-height: 32px; }
.option i { width: 20px; height: 20px; margin-top: 2px; border: 1.3px solid #a0a1a7; border-radius: 50%; background: #fff; }
.option.checked i { border: 6.5px solid #ff4b4b; background: #f3f2f7; }

/* Taskbar */
.taskbar {
  flex: none;
  display: flex;
  align-items: center;
  height: 60px;
  padding-bottom: 1px;
  border-top: 1px solid #444;
  background: #1c1c1c;
  color: #fff;
}
.weather { display: flex; align-items: center; width: 447px; padding-left: 24px; gap: 8px; }
.weather-icon { position: relative; }
.weather-icon svg { width: 32px; height: 32px; }
.weather-icon b {
  position: absolute;
  top: -6px;
  left: 15px;
  width: 20px;
  height: 20px;
  border-radius: 50%;
  background: #c42b1c;
  font-weight: 400;
  line-height: 20px;
  text-align: center;
}
.weather-text { display: flex; flex-direction: column; line-height: 20px; }
.weather-text em { font-style: normal; font-size: 14.6px; color: #c2c2c2; }
.start { width: 29px; height: 29px; }
.search {
  display: flex;
  align-items: center;
  width: 273px;
  height: 38px;
  margin-left: 18px;
  padding: 0 11px 0 14px;
  border-radius: 19px;
  background: #f2f2f2;
}
.lens { width: 18px; height: 18px; }
.search span { margin: 0 auto 0 13px; font-size: 16.3px; color: #5a5a5a; }
.quill { width: 51px; height: 28px; }
.apps { display: flex; margin-left: 3.5px; }
.app-btn {
  position: relative;
  display: flex;
  align-items: center;
  justify-content: center;
  width: 50px;
  height: 50px;
  margin: 0 2.5px;
  border-radius: 5px;
}
.app-btn svg { width: 30px; height: 30px; }
.app-btn.current { background: #2a2a2a; box-shadow: inset 0 0 0 1px #333; }
.app-btn.run::after, .app-btn.current::after {
  content: "";
  position: absolute;
  bottom: 1px;
  left: 21px;
  width: 8px;
  height: 4px;
  border-radius: 2px;
  background: #9a9a9a;
}
.app-btn.current::after { left: 15px; width: 20px; background: #4cc2ff; }
.dot { position: absolute; top: 4px; left: 26px; width: 20px; height: 20px; border-radius: 50%; background: #ffc20e; }
.count {
  position: absolute;
  top: 4px;
  left: 23px;
  width: 26px;
  height: 20px;
  border-radius: 10px;
  background: #4cc2ff;
  color: #000;
  font-weight: 400;
  line-height: 20px;
  text-align: center;
}
.tray { display: flex; align-items: center; margin-left: auto; padding-right: 24px; }
.chev { width: 14px; height: 8px; }
.lang, .clock { display: flex; flex-direction: column; line-height: 20px; }
.lang { width: 30px; margin-left: 26px; align-items: center; }
.clock { width: 75px; margin-left: 15px; align-items: flex-end; font-size: 14.4px; }
.wifi { width: 20px; height: 17px; margin-left: 22px; }
.vol { width: 20px; height: 18px; margin-left: 10px; }
.batt { width: 20px; height: 18px; margin-left: 10px; }
```
